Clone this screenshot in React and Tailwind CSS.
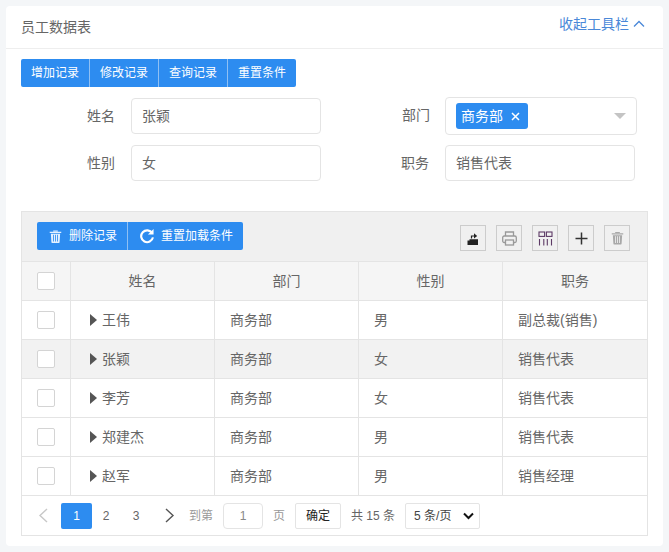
import React from "react";
const rows = [
  ["王伟", "商务部", "男", "副总裁(销售)"],
  ["张颖", "商务部", "女", "销售代表"],
  ["李芳", "商务部", "女", "销售代表"],
  ["郑建杰", "商务部", "男", "销售代表"],
  ["赵军", "商务部", "男", "销售经理"],
];
const Check = () => <span className="block w-[18px] h-[18px] bg-white border border-[#d4d4d4] rounded-[2px]" />;
const Tool = ({ children }) => (
  <span className="w-[26px] h-[26px] border border-[#cccccc] flex items-center justify-center">{children}</span>
);
const Trash = ({ c = "#fff", line = "#2d8cf0", w = 13, h = 13 }) => (
  <svg width={w} height={h} viewBox="0 0 14 14" fill={c}>
    <path d="M0.8 2h12.4v1.3H0.8zM4.5 0.6h5v1h-5z" />
    <path d="M2 4h10l-.6 9.2c0 .4-.3.7-.7.7H3.300c-.4 0-.7-.3-.7-.7z" />
    <path d="M4.300 5.200h.9v7.200h-.9zM6.550 5.200h.9v7.200h-.9zM8.800 5.200h.9v7.200h-.9z" fill={line} />
  </svg>
);
const Field = ({ label, children }) => (
  <div className="flex items-start">
    <span className="w-[110px] pr-[16px] text-right text-[14px] leading-[36px] text-[#666666] shrink-0">{label}</span>
    {children}
  </div>
);
const Input = ({ value }) => (
  <div className="w-[190px] h-[36px] border border-[#e4e4e4] rounded-[4px] flex items-center pl-[10px] text-[14px] text-[#666666] bg-white">{value}</div>
);
const cols = "grid grid-cols-[48px_144px_144px_144px_1fr] h-[39px] border-t border-[#e4e4e4] text-[14px] shrink-0";
export default function App() {
  return (
    <div className="w-[669px] h-[552px] bg-[#f4f6f8] p-[6px] overflow-hidden text-[#666666]" style={{ fontFamily: '"Liberation Sans","Noto Sans CJK SC",sans-serif' }}>
      <div className="w-[657px] h-[540px] bg-white rounded-[4px]">
        <div className="h-[43px] border-b border-[#eeeeee] flex items-start justify-between pl-[15px] pr-[18px]">
          <span className="text-[14px] text-[#666666] mt-[12px] leading-[18px]">员工数据表</span>
          <span className="text-[14px] text-[#4a88d8] mt-[8px] leading-[20px] flex items-center">收起工具栏
            <svg className="ml-[4px]" width="12" height="8" viewBox="0 0 12 8" fill="none" stroke="#4a88d8" strokeWidth="1.3"><path d="M1 6.500 6 1.500l5 5" /></svg>
          </span>
        </div>
        <div className="pl-[15px] pt-[10px]">
          <div className="flex w-[275px] h-[28px] bg-[#2d8cf0] rounded-[2px] text-white text-[12px] divide-x divide-[#8fc0f4]">
            {["增加记录", "修改记录", "查询记录", "重置条件"].map((t) => (
              <span key={t} className="flex-1 flex items-center justify-center">{t}</span>
            ))}
          </div>
          <div className="mt-[11px] grid grid-cols-[314px_1fr] gap-y-[10px]">
            <Field label="姓名"><Input value="张颖" /></Field>
            <div className="flex items-start -mt-[1px]">
              <span className="w-[110px] pr-[15px] text-right text-[14px] leading-[36px] shrink-0">部门</span>
              <div className="w-[192px] h-[38px] border border-[#e4e4e4] rounded-[4px] flex items-center pl-[10px] pr-[10px] justify-between">
                <span className="h-[26px] w-[72px] bg-[#2d8cf0] rounded-[3px] text-white text-[14px] flex items-center pl-[5px]">商务部
                  <svg className="ml-[8px]" width="9" height="9" viewBox="0 0 9 9" stroke="#fff" strokeWidth="1.5"><path d="M1 1l7 7M8 1 1 8" /></svg>
                </span>
                <span className="w-0 h-0 border-x-[6px] border-x-transparent border-t-[6px] border-t-[#c4c4c4]" />
              </div>
            </div>
            <Field label="性别"><Input value="女" /></Field>
            <Field label="职务"><Input value="销售代表" /></Field>
          </div>
          <div className="mt-[30px] w-[627px] h-[325px] border border-[#e4e4e4] flex flex-col">
            <div className="h-[49px] bg-[#f0f0f0] flex items-start justify-between pt-[10px] pl-[15px] pr-[17px] shrink-0">
              <div className="flex h-[28px] bg-[#2d8cf0] rounded-[2px] text-white text-[12px] divide-x divide-[#8fc0f4]">
                <span className="w-[91px] flex items-center pl-[12px]"><Trash c="#e4f1ff" />
                  <span className="ml-[7px]">删除记录</span></span>
                <span className="w-[115px] flex items-center pl-[11px]">
                  <svg width="16" height="16" viewBox="0 0 17 17" fill="none" stroke="#fff" strokeWidth="2.300"><path d="M14 5.500A6.300 6.300 0 1 0 14.800 10" /><path d="M15.500 1v6h-6z" fill="#fff" stroke="none" /></svg>
                  <span className="ml-[6px]">重置加载条件</span></span>
              </div>
              <div className="flex gap-[10px] mt-[3px]">
                <Tool>
                  <svg width="13" height="13" viewBox="0 0 13 13"><path d="M0.500 8.500h2V7.200h8.500V13H0.500z" fill="#222222" /><path d="M4.500 6.500V4H7" fill="none" stroke="#222222" strokeWidth="1.200" /><path d="M7 1.300 10.200 4 7 6.500z" fill="#222222" /></svg>
                </Tool>
                <Tool>
                  <svg width="17" height="17" viewBox="0 0 17 17" fill="none" stroke="#999999" strokeWidth="1.300"><path d="M4.500 6V2h8v4" /><rect x="1.700" y="6" width="13.600" height="6.500" rx="1.500" /><rect x="4.500" y="10" width="8" height="5" fill="#f0f0f0" /></svg>
                </Tool>
                <Tool>
                  <svg width="15" height="15" viewBox="0 0 15 15" fill="none" stroke="#5d3a66" strokeWidth="1.100"><rect x="1" y="1" width="5.600" height="4.400" /><rect x="8.400" y="1" width="5.600" height="4.400" /><path d="M1.500 8v6.500M5.800 8v6.500M9.300 8v6.500M13.500 8v6.500" /></svg>
                </Tool>
                <Tool>
                  <svg width="13" height="13" viewBox="0 0 13 13" stroke="#333333" strokeWidth="1.500"><path d="M0.500 6.500h12M6.500 .5v12" /></svg>
                </Tool>
                <Tool><Trash c="#a8a8a8" line="#f0f0f0" w={13} h={14} /></Tool>
              </div>
            </div>
            <div className={`${cols} bg-[#f5f5f5]`}>
              <div className="flex items-center justify-center"><Check /></div>
              {["姓名", "部门", "性别", "职务"].map((h) => (
                <div key={h} className="border-l border-[#e4e4e4] flex items-center justify-center">{h}</div>
              ))}
            </div>
            {rows.map((r, i) => (
              <div key={r[0]} className={`${cols} ${i === 1 ? "bg-[#f2f2f2]" : "bg-white"}`}>
                <div className="flex items-center justify-center"><Check /></div>
                <div className="border-l border-[#e4e4e4] flex items-center pl-[19px]">
                  <span className="w-0 h-0 border-y-[6px] border-y-transparent border-l-[7px] border-l-[#555555] mr-[5px]" />{r[0]}
                </div>
                <div className="border-l border-[#e4e4e4] flex items-center pl-[15px]">{r[1]}</div>
                <div className="border-l border-[#e4e4e4] flex items-center pl-[15px]">{r[2]}</div>
                <div className="border-l border-[#e4e4e4] flex items-center pl-[15px]">{r[3]}</div>
              </div>
            ))}
            <div className="flex-1 border-t border-[#e4e4e4] flex items-center text-[12px] bg-white pl-[15px]">
              <svg width="12" height="15" viewBox="0 0 12 15" fill="none" stroke="#c8c8c8" strokeWidth="1.400" className="mr-[12px]"><path d="M10 1 3 7.500l7 6.500" /></svg>
              <span className="w-[31px] h-[26px] bg-[#2d8cf0] text-white rounded-[2px] flex items-center justify-center">1</span>
              <span className="w-[28px] text-center">2</span>
              <span className="w-[32px] text-center">3</span>
              <svg width="12" height="15" viewBox="0 0 12 15" fill="none" stroke="#555555" strokeWidth="1.400" className="ml-[12px]"><path d="M2 1l7 6.500L2 14" /></svg>
              <span className="ml-[13px] text-[#999999]">到第</span>
              <span className="ml-[10px] w-[40px] h-[26px] border border-[#e4e4e4] rounded-[4px] flex items-center justify-center text-[#888888]">1</span>
              <span className="ml-[10px] text-[#999999]">页</span>
              <span className="ml-[10px] w-[46px] h-[26px] border border-[#e4e4e4] rounded-[2px] flex items-center justify-center text-[#222222]">确定</span>
              <span className="ml-[10px]">共 15 条</span>
              <span className="ml-[10px] w-[75px] h-[26px] border border-[#e4e4e4] rounded-[2px] flex items-center justify-between pl-[8px] pr-[5px] text-[#444444]">5 条/页
                <svg width="11" height="8" viewBox="0 0 11 8" fill="none" stroke="#111111" strokeWidth="2"><path d="M1 1.500l4.500 4.500L10 1.500" /></svg>
              </span>
            </div>
          </div>
        </div>
      </div>
    </div>
  );
}
